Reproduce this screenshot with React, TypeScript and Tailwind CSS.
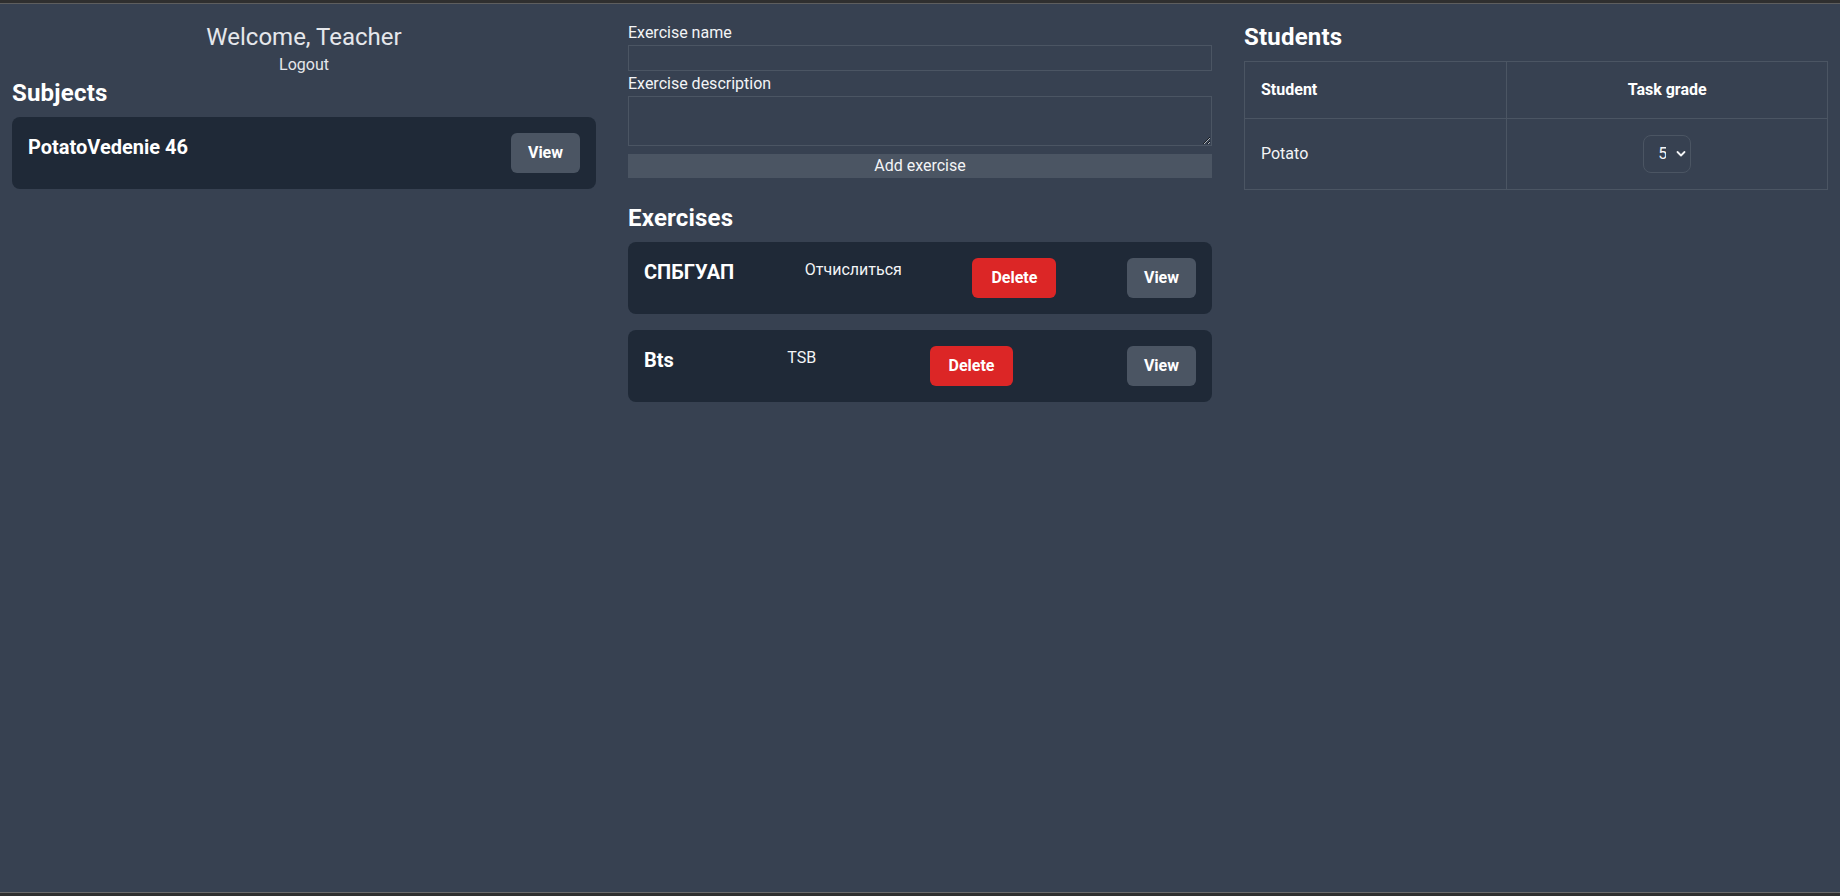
import React from "react";

function ExerciseCard({ title, desc }: { title: string; desc: string }) {
  return (
    <div className="flex items-start justify-between rounded-lg bg-[#1f2937] p-4">
      <h3 className="text-xl font-bold text-white">{title}</h3>
      <p className="text-base text-gray-100">{desc}</p>
      <button className="rounded-md bg-[#dc2626] px-[19px] py-2 text-base font-bold text-white">Delete</button>
      <button className="rounded-md bg-[#4b5563] px-[17px] py-2 text-base font-bold text-white">View</button>
    </div>
  );
}

export default function App() {
  return (
    <div className="flex h-screen flex-col bg-[#2f2f2f] font-['Roboto',sans-serif]">
      <div className="h-[3px]" />
      <div className="h-px bg-[#5e5e5e]" />
      <main className="grid flex-1 grid-cols-3 items-start gap-8 bg-[#374151] px-3 pt-[17px] text-gray-100">
        <section>
          <div className="text-center">
            <h1 className="text-2xl text-gray-200">Welcome, Teacher</h1>
            <div>
              <button className="text-base text-gray-200">Logout</button>
            </div>
          </div>
          <h2 className="text-2xl font-bold tracking-[0.2px] text-white">Subjects</h2>
          <div className="mt-2 flex items-start justify-between rounded-lg bg-[#1f2937] p-4">
            <h3 className="text-xl font-bold text-white">PotatoVedenie 46</h3>
            <button className="rounded-md bg-[#4b5563] px-[17px] py-2 text-base font-bold text-white">View</button>
          </div>
        </section>

        <section>
          <form className="flex flex-col" onSubmit={(e) => e.preventDefault()}>
            <label className="text-base text-gray-100">Exercise name</label>
            <input className="h-[26px] border border-[#4b5563] bg-transparent text-gray-100 outline-none" />
            <label className="mt-px text-base text-gray-100">Exercise description</label>
            <textarea rows={2} className="h-[50px] resize-y border border-[#4b5563] bg-transparent text-gray-100 outline-none" />
            <button type="submit" className="mt-2 h-6 bg-[#4b5563] text-base leading-6 text-gray-100">Add exercise</button>
          </form>
          <h2 className="mt-6 mb-2 text-2xl font-bold tracking-[0.2px] text-white">Exercises</h2>
          <div className="flex flex-col gap-4">
            <ExerciseCard title="СПБГУАП" desc="Отчислиться" />
            <ExerciseCard title="Bts" desc="TSB" />
          </div>
        </section>

        <section>
          <h2 className="mb-2 text-2xl font-bold tracking-[0.2px] text-white">Students</h2>
          <table className="w-full border-collapse border border-[#4b5563]">
            <thead>
              <tr>
                <th className="w-[45%] border border-[#4b5563] p-4 text-left text-base font-bold text-white">Student</th>
                <th className="border border-[#4b5563] p-4 text-center text-base font-bold text-white">Task grade</th>
              </tr>
            </thead>
            <tbody>
              <tr>
                <td className="border border-[#4b5563] px-4 py-4 text-base text-gray-100">Potato</td>
                <td className="border border-[#4b5563] px-4 py-4">
                  <div className="flex justify-center">
                    <div className="relative h-[38px] w-12">
                      <select
                        defaultValue="5"
                        className="h-[38px] w-12 appearance-none rounded-lg border border-[#4b5563] bg-transparent py-[6px] pl-[14px] pr-6 text-base leading-6 text-gray-100 outline-none"
                      >
                        <option value="1">1</option>
                        <option value="2">2</option>
                        <option value="3">3</option>
                        <option value="4">4</option>
                        <option value="5">5</option>
                      </select>
                      <svg
                        className="pointer-events-none absolute right-[5px] top-1/2 -translate-y-1/2"
                        width="10"
                        height="7"
                        viewBox="0 0 10 7"
                        fill="none"
                      >
                        <path d="M1.5 1.5 L5 5 L8.5 1.5" stroke="#f3f4f6" strokeWidth="1.8" strokeLinecap="round" strokeLinejoin="round" />
                      </svg>
                    </div>
                  </div>
                </td>
              </tr>
            </tbody>
          </table>
        </section>
      </main>
      <div className="h-px bg-[#6a6a6a]" />
      <div className="h-[3px]" />
    </div>
  );
}
